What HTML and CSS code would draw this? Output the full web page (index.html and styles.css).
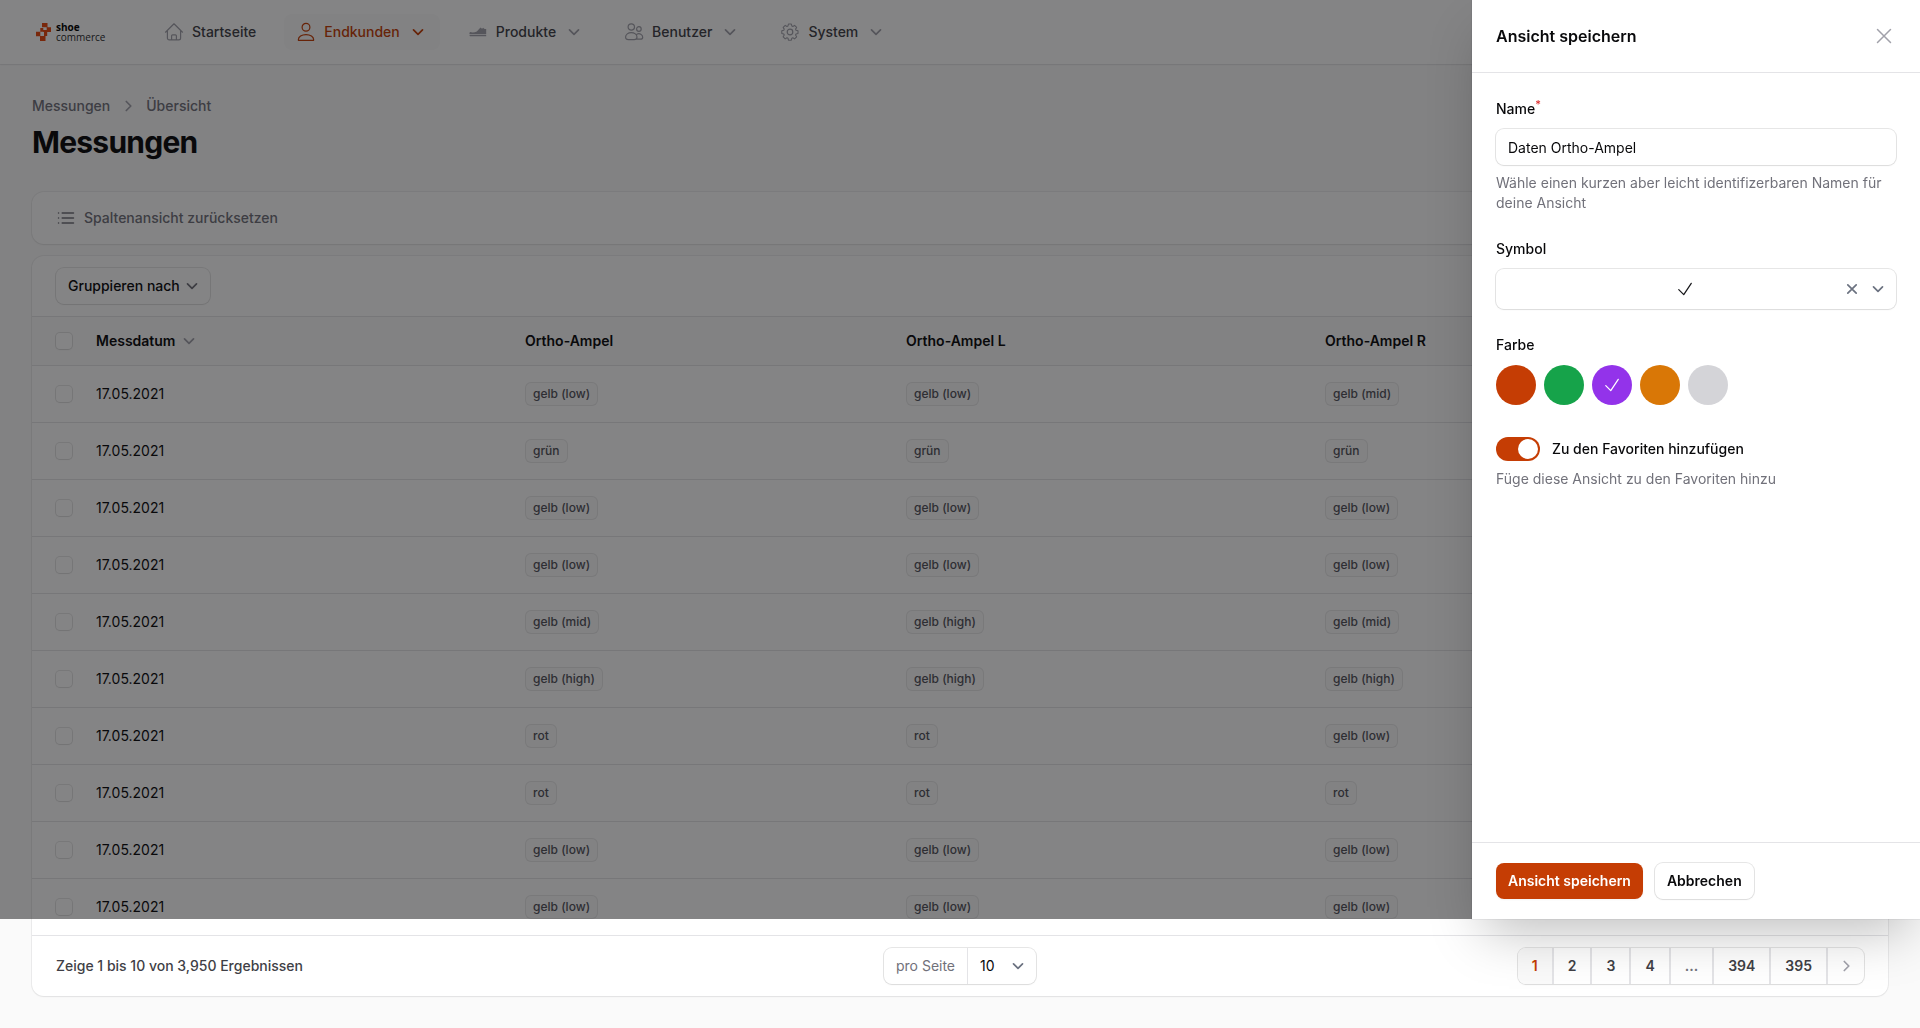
FILE: index.html
```html
<!DOCTYPE html>
<html lang="de">
<head>
    <meta charset="UTF-8">
    <meta name="viewport" content="width=device-width, initial-scale=1.0">
    <title>Messungen</title>
    <link rel="stylesheet" href="styles.css">
</head>
<body>
    <!-- Shared icons -->
    <svg class="sprite" aria-hidden="true">
        <symbol id="chevron-down" viewBox="0 0 20 20"><path d="M5.5 7.8 10 12.3 14.5 7.8" fill="none" stroke="currentColor" stroke-width="1.7" stroke-linecap="round" stroke-linejoin="round"/></symbol>
        <symbol id="chevron-right" viewBox="0 0 20 20"><path d="M8.3 5.5 12.8 10 8.3 14.5" fill="none" stroke="currentColor" stroke-width="1.7" stroke-linecap="round" stroke-linejoin="round"/></symbol>
        <symbol id="check" viewBox="0 0 24 24"><path d="M4.5 12.75l6 6 9-13.5" fill="none" stroke="currentColor" stroke-width="1.5" stroke-linecap="round" stroke-linejoin="round"/></symbol>
    </svg>

    <header class="topbar">
        <a class="logo" href="#" aria-label="shoe commerce">
            <svg class="logo-mark" viewBox="0 0 16 18" aria-hidden="true">
                <path fill="#e8470c" d="M6 0h5.500v4.300H6zM10.700 4.300H15V9h-4.300zM0 8.700h4.300v4.500H0zM4 13h5.500v5H4zM4.300 5h3v3.700h-3zM8 9h3.200v4H8zM7.300 7h3.400v2H7.300z"/>
            </svg>
            <span class="logo-text"><strong>shoe</strong><span>commerce</span></span>
        </a>
        <nav class="nav">
            <a class="nav-item" href="#">
                <svg class="icon" viewBox="0 0 20 20" aria-hidden="true"><path d="M1.500 10.200 10 1.800l8.500 8.400M3.400 8.600V16a1.900 1.900 0 0 0 1.900 1.900h9.400a1.900 1.900 0 0 0 1.900-1.900V8.600M7.600 17.800v-4a1 1 0 0 1 1-1h2.800a1 1 0 0 1 1 1v4"/></svg>
                Startseite
            </a>
            <button type="button" class="nav-item active">
                <svg class="icon" viewBox="0 0 20 20" aria-hidden="true"><circle cx="10" cy="5.300" r="3.900"/><path d="M2.400 18.300v-.7c0-2.900 3.200-5 7.600-5s7.600 2.100 7.600 5v.7z"/></svg>
                Endkunden
                <svg class="chevron"><use href="#chevron-down"/></svg>
            </button>
            <button type="button" class="nav-item">
                <svg class="icon shoe" viewBox="0 0 20 20" aria-hidden="true"><path d="M2 10c2 .8 4.700.6 6.800-.6l3.700-3.900 1.500 1.200 1.300-.9c.5 1 1.700 1.400 2.900 1.200v5.200H1.600c-.3-.8-.1-1.600.4-2.200zM1.500 13h16.700v1.300H2.500c-.6 0-1-.5-1-1.300z"/></svg>
                Produkte
                <svg class="chevron"><use href="#chevron-down"/></svg>
            </button>
            <button type="button" class="nav-item">
                <svg class="icon" viewBox="0 0 20 20" aria-hidden="true"><circle cx="7.300" cy="5" r="3.200"/><circle cx="14.900" cy="7" r="2.300"/><path d="M1.600 15c0-2.400 2.500-4.400 5.700-4.400s5.700 2 5.700 4.400c0 1.900-1 2.600-2.800 2.600H4.400c-1.800 0-2.800-.7-2.800-2.600zM12.800 12.200c2.800-1.300 5.900.4 5.900 3 0 1.500-.8 2-2.200 2h-4"/></svg>
                Benutzer
                <svg class="chevron"><use href="#chevron-down"/></svg>
            </button>
            <button type="button" class="nav-item">
                <svg class="icon" viewBox="0 0 20 20" aria-hidden="true"><circle cx="10" cy="10" r="2.800"/><path d="M8.400 2h3.200l.5 2.200 1.200.5 1.900-1.200 2.300 2.300-1.200 1.900.5 1.200 2.200.5v3.200l-2.200.5-.5 1.200 1.200 1.900-2.300 2.300-1.900-1.200-1.200.5-.5 2.200H8.400l-.5-2.200-1.200-.5-1.900 1.200-2.300-2.300 1.200-1.900-.5-1.200-2.200-.5V9.400l2.200-.5.5-1.200-1.200-1.900 2.300-2.300 1.900 1.200 1.200-.5z" transform="translate(.9 .2) scale(.9)"/></svg>
                System
                <svg class="chevron"><use href="#chevron-down"/></svg>
            </button>
        </nav>
    </header>

    <main class="content">
        <nav class="breadcrumbs">
            <a href="#">Messungen</a>
            <svg class="chevron"><use href="#chevron-right"/></svg>
            <a href="#">Übersicht</a>
        </nav>
        <h1>Messungen</h1>

        <div class="card views">
            <button type="button" class="reset-btn">
                <svg class="icon" viewBox="0 0 20 20" aria-hidden="true"><path d="M6.200 5h11.300M6.200 10h11.300M6.200 15h11.300M2.500 5h.1M2.500 10h.1M2.500 15h.1"/></svg>
                Spaltenansicht zurücksetzen
            </button>
        </div>

        <div class="card">
            <div class="table-toolbar">
                <button type="button" class="btn group-btn">
                    Gruppieren nach
                    <svg class="chevron"><use href="#chevron-down"/></svg>
                </button>
            </div>
            <table>
                <thead>
                    <tr>
                        <th class="col-check"><input type="checkbox" aria-label="Alle auswählen"></th>
                        <th class="col-date"><button type="button" class="sort-btn">Messdatum <svg class="chevron"><use href="#chevron-down"/></svg></button></th>
                        <th class="col-ampel">Ortho-Ampel</th>
                        <th class="col-left">Ortho-Ampel L</th>
                        <th>Ortho-Ampel R</th>
                    </tr>
                </thead>
                <tbody>
                    <tr><td><input type="checkbox" aria-label="Zeile 1"></td><td>17.05.2021</td><td><span class="badge">gelb (low)</span></td><td><span class="badge">gelb (low)</span></td><td><span class="badge">gelb (mid)</span></td></tr>
                    <tr><td><input type="checkbox" aria-label="Zeile 2"></td><td>17.05.2021</td><td><span class="badge">grün</span></td><td><span class="badge">grün</span></td><td><span class="badge">grün</span></td></tr>
                    <tr><td><input type="checkbox" aria-label="Zeile 3"></td><td>17.05.2021</td><td><span class="badge">gelb (low)</span></td><td><span class="badge">gelb (low)</span></td><td><span class="badge">gelb (low)</span></td></tr>
                    <tr><td><input type="checkbox" aria-label="Zeile 4"></td><td>17.05.2021</td><td><span class="badge">gelb (low)</span></td><td><span class="badge">gelb (low)</span></td><td><span class="badge">gelb (low)</span></td></tr>
                    <tr><td><input type="checkbox" aria-label="Zeile 5"></td><td>17.05.2021</td><td><span class="badge">gelb (mid)</span></td><td><span class="badge">gelb (high)</span></td><td><span class="badge">gelb (mid)</span></td></tr>
                    <tr><td><input type="checkbox" aria-label="Zeile 6"></td><td>17.05.2021</td><td><span class="badge">gelb (high)</span></td><td><span class="badge">gelb (high)</span></td><td><span class="badge">gelb (high)</span></td></tr>
                    <tr><td><input type="checkbox" aria-label="Zeile 7"></td><td>17.05.2021</td><td><span class="badge">rot</span></td><td><span class="badge">rot</span></td><td><span class="badge">gelb (low)</span></td></tr>
                    <tr><td><input type="checkbox" aria-label="Zeile 8"></td><td>17.05.2021</td><td><span class="badge">rot</span></td><td><span class="badge">rot</span></td><td><span class="badge">rot</span></td></tr>
                    <tr><td><input type="checkbox" aria-label="Zeile 9"></td><td>17.05.2021</td><td><span class="badge">gelb (low)</span></td><td><span class="badge">gelb (low)</span></td><td><span class="badge">gelb (low)</span></td></tr>
                    <tr><td><input type="checkbox" aria-label="Zeile 10"></td><td>17.05.2021</td><td><span class="badge">gelb (low)</span></td><td><span class="badge">gelb (low)</span></td><td><span class="badge">gelb (low)</span></td></tr>
                </tbody>
            </table>
            <div class="table-footer">
                <span class="result-count">Zeige 1 bis 10 von 3,950 Ergebnissen</span>
                <div class="per-page">
                    <label for="perPage">pro Seite</label>
                    <div class="select-wrap">
                        <select id="perPage">
                            <option>10</option>
                            <option>25</option>
                            <option>50</option>
                        </select>
                        <svg class="chevron"><use href="#chevron-down"/></svg>
                    </div>
                </div>
                <nav class="pagination">
                    <button type="button" class="current">1</button>
                    <button type="button">2</button>
                    <button type="button">3</button>
                    <button type="button">4</button>
                    <button type="button" class="dots" disabled>...</button>
                    <button type="button">394</button>
                    <button type="button">395</button>
                    <button type="button" class="next" aria-label="Weiter"><svg class="chevron"><use href="#chevron-right"/></svg></button>
                </nav>
            </div>
        </div>
    </main>

    <div class="overlay"></div>

    <form class="drawer">
        <div class="drawer-header">
            <h2>Ansicht speichern</h2>
            <button type="button" class="close-btn" aria-label="Schließen">
                <svg class="icon-lg" viewBox="0 0 24 24" aria-hidden="true"><path d="M5.500 5.500l13 13M18.500 5.500l-13 13"/></svg>
            </button>
        </div>
        <div class="drawer-body">
            <div class="form-group">
                <label for="viewName">Name<sup>*</sup></label>
                <input type="text" id="viewName" value="Daten Ortho-Ampel">
                <p class="hint">Wähle einen kurzen aber leicht identifizerbaren Namen für deine Ansicht</p>
            </div>
            <div class="form-group">
                <label for="viewIcon">Symbol</label>
                <div class="icon-select">
                    <button type="button" id="viewIcon" class="icon-value"><svg class="icon-lg"><use href="#check"/></svg></button>
                    <button type="button" class="icon-clear" aria-label="Entfernen"><svg viewBox="0 0 20 20" class="icon"><path d="M5.800 5.800l8.400 8.400M14.200 5.800l-8.400 8.400"/></svg></button>
                    <svg class="chevron"><use href="#chevron-down"/></svg>
                </div>
            </div>
            <fieldset class="form-group">
                <legend>Farbe</legend>
                <div class="swatches">
                    <label class="swatch primary"><input type="radio" name="color" aria-label="Orange"></label>
                    <label class="swatch green"><input type="radio" name="color" aria-label="Grün"></label>
                    <label class="swatch purple"><input type="radio" name="color" aria-label="Violett" checked><svg class="swatch-check"><use href="#check"/></svg></label>
                    <label class="swatch amber"><input type="radio" name="color" aria-label="Gelb"></label>
                    <label class="swatch gray"><input type="radio" name="color" aria-label="Grau"></label>
                </div>
            </fieldset>
            <div class="form-group">
                <div class="toggle-row">
                    <input type="checkbox" id="favorite" class="toggle" role="switch" checked>
                    <label for="favorite">Zu den Favoriten hinzufügen</label>
                </div>
                <p class="hint">Füge diese Ansicht zu den Favoriten hinzu</p>
            </div>
        </div>
        <div class="drawer-footer">
            <button type="submit" class="btn btn-primary">Ansicht speichern</button>
            <button type="button" class="btn btn-cancel">Abbrechen</button>
        </div>
    </form>
</body>
</html>
```
FILE: styles.css
```css
:root {
    --primary: #c53d04;
    --ring: rgba(9, 9, 11, 0.1);
    --line: #e4e4e7;
    --modal-bottom: 109px;
}
* {
    box-sizing: border-box;
}
body {
    margin: 0;
    background: #fafafa;
    color: #09090b;
    font-family: Inter, "Liberation Sans", sans-serif;
    font-size: 14px;
    line-height: 20px;
}
button,
input,
select {
    font: inherit;
    color: inherit;
    margin: 0;
}
button {
    border: none;
    background: none;
    padding: 0;
    cursor: pointer;
}
a {
    color: inherit;
    text-decoration: none;
}
.sprite {
    position: absolute;
    width: 0;
    height: 0;
}
.icon,
.chevron {
    width: 20px;
    height: 20px;
    flex-shrink: 0;
}
.icon,
.icon-lg {
    fill: none;
    stroke: currentColor;
    stroke-width: 1.2;
    stroke-linecap: round;
    stroke-linejoin: round;
}
.icon-lg {
    width: 24px;
    height: 24px;
}

/* Top bar */
.topbar {
    display: flex;
    align-items: center;
    height: 64px;
    padding: 0 32px;
    background: #fff;
    box-shadow: 0 0 0 1px rgba(9, 9, 11, 0.05), 0 1px 2px rgba(0, 0, 0, 0.05);
}
.logo {
    display: flex;
    align-items: center;
    gap: 4px;
    width: 120px;
    padding-left: 4px;
}
.logo-mark {
    width: 16px;
    height: 18px;
}
.logo-text {
    display: flex;
    flex-direction: column;
    font-family: "Open Sans", sans-serif;
    font-size: 10px;
    line-height: 10px;
    color: #27272a;
}
.logo-text strong {
    color: #000;
}
.nav {
    display: flex;
    gap: 16px;
}
.nav-item {
    display: flex;
    align-items: center;
    gap: 8px;
    padding: 8px 12px;
    border-radius: 8px;
    font-weight: 500;
    color: #3f3f46;
}
.nav-item .icon,
.nav-item .chevron {
    color: #a1a1aa;
}
.nav-item .shoe {
    fill: currentColor;
    stroke: none;
}
.nav-item.active,
.nav-item.active .icon,
.nav-item.active .chevron {
    color: var(--primary);
}
.nav-item.active {
    background: #fafafa;
}

/* Page */
.content {
    padding: 32px;
}
.breadcrumbs {
    display: flex;
    align-items: center;
    gap: 8px;
    margin-bottom: 8px;
    font-weight: 500;
    color: #71717a;
}
.breadcrumbs .chevron {
    color: #a1a1aa;
}
h1 {
    margin: 0 0 32px;
    font-size: 30px;
    line-height: 36px;
    font-weight: 700;
    letter-spacing: -0.025em;
}
.card {
    background: #fff;
    border-radius: 12px;
    box-shadow: 0 0 0 1px rgba(9, 9, 11, 0.05), 0 1px 2px rgba(0, 0, 0, 0.05);
}
.views {
    margin-bottom: 12px;
    padding: 16px 24px;
}
.reset-btn {
    display: flex;
    align-items: center;
    gap: 8px;
    font-weight: 500;
    color: #71717a;
}
.reset-btn .icon {
    stroke-width: 1.5;
}
.table-toolbar {
    display: flex;
    padding: 12px 24px;
    border-bottom: 1px solid var(--line);
}
.btn {
    display: inline-flex;
    align-items: center;
    gap: 4px;
    padding: 8px 12px;
    border-radius: 8px;
    background: #fff;
    box-shadow: 0 0 0 1px var(--ring), 0 1px 2px rgba(0, 0, 0, 0.05);
    font-weight: 600;
}
.group-btn {
    gap: 2px;
    padding-right: 8px;
    font-weight: 500;
}
.group-btn .chevron {
    color: #71717a;
}

/* Table */
table {
    width: 100%;
    table-layout: fixed;
    border-collapse: collapse;
}
th,
td {
    padding: 0 12px;
    text-align: left;
    border-bottom: 1px solid var(--line);
}
th {
    height: 48px;
    background: #fafafa;
    font-weight: 600;
}
td {
    height: 57px;
}
th:first-child,
td:first-child {
    padding: 0 0 0 24px;
}
.col-check {
    width: 52px;
}
.col-date {
    width: 429px;
}
.col-ampel {
    width: 381px;
}
.col-left {
    width: 419px;
}
.sort-btn {
    display: flex;
    align-items: center;
    gap: 4px;
}
.sort-btn .chevron {
    color: #a1a1aa;
}
table input[type="checkbox"] {
    appearance: none;
    display: block;
    width: 16px;
    height: 16px;
    border-radius: 4px;
    background: #fff;
    box-shadow: 0 0 0 1px var(--ring), 0 1px 2px rgba(0, 0, 0, 0.05);
}
.badge {
    display: inline-block;
    padding: 4px 8px;
    border-radius: 6px;
    background: #fafafa;
    box-shadow: inset 0 0 0 1px rgba(82, 82, 91, 0.1);
    color: #52525b;
    font-size: 12px;
    line-height: 16px;
    font-weight: 500;
    vertical-align: middle;
}
.table-footer {
    display: grid;
    grid-template-columns: 1fr auto 1fr;
    align-items: center;
    padding: 12px 24px;
}
.result-count {
    font-weight: 500;
    color: #3f3f46;
}
.per-page {
    display: flex;
    height: 36px;
    border-radius: 8px;
    box-shadow: 0 0 0 1px var(--ring), 0 1px 2px rgba(0, 0, 0, 0.05);
}
.per-page label {
    padding: 8px 12px;
    border-right: 1px solid var(--line);
    color: #71717a;
}
.select-wrap {
    position: relative;
}
.select-wrap select {
    appearance: none;
    width: 68px;
    height: 36px;
    padding: 0 12px;
    border: none;
    background: transparent;
}
.select-wrap .chevron {
    position: absolute;
    top: 8px;
    right: 8px;
    color: #6b7280;
    pointer-events: none;
}
.pagination {
    display: flex;
    justify-self: end;
    height: 36px;
    border-radius: 8px;
    overflow: hidden;
    background: #fff;
    box-shadow: 0 0 0 1px var(--ring), 0 1px 2px rgba(0, 0, 0, 0.05);
}
.pagination button {
    padding: 0 14px;
    border-right: 2px solid var(--line);
    font-weight: 600;
    color: #3f3f46;
}
.pagination .current {
    background: #fafafa;
    color: var(--primary);
}
.pagination .dots {
    color: #71717a;
}
.pagination .next {
    display: flex;
    align-items: center;
    padding: 0 8px;
    border: none;
    color: #a1a1aa;
}

/* Slide-over */
.overlay {
    position: fixed;
    inset: 0 0 var(--modal-bottom);
    background: rgba(9, 9, 11, 0.5);
}
.drawer {
    position: fixed;
    top: 0;
    right: 0;
    bottom: var(--modal-bottom);
    display: flex;
    flex-direction: column;
    width: 448px;
    max-width: 100%;
    background: #fff;
    box-shadow: 0 0 0 1px rgba(9, 9, 11, 0.05), 0 25px 50px -12px rgba(0, 0, 0, 0.25);
}
.drawer-header {
    display: flex;
    align-items: center;
    justify-content: space-between;
    padding: 24px;
    border-bottom: 1px solid var(--line);
}
.drawer-header h2 {
    margin: 0;
    font-size: 16px;
    line-height: 24px;
    font-weight: 600;
}
.close-btn {
    display: flex;
    color: #a1a1aa;
}
.close-btn .icon-lg {
    stroke-width: 1.5;
}
.drawer-body {
    flex: 1;
    padding: 24px;
    overflow: auto;
}
.form-group {
    display: flex;
    flex-direction: column;
    gap: 8px;
    margin: 0 0 24px;
    padding: 0;
    border: none;
}
.form-group label,
.form-group legend {
    padding: 0;
    line-height: 24px;
    font-weight: 500;
}
.form-group legend {
    margin-bottom: 8px;
}
sup {
    color: #dc2626;
    font-size: 11px;
    line-height: 0;
}
input[type="text"] {
    height: 36px;
    padding: 0 12px;
    border: none;
    border-radius: 8px;
    box-shadow: 0 0 0 1px var(--ring), 0 1px 2px rgba(0, 0, 0, 0.05);
}
.hint {
    margin: 0;
    color: #71717a;
}
.icon-select {
    display: flex;
    align-items: center;
    height: 40px;
    padding-right: 8px;
    border-radius: 8px;
    box-shadow: 0 0 0 1px var(--ring), 0 1px 2px rgba(0, 0, 0, 0.05);
    color: #6b7280;
}
.icon-value {
    display: flex;
    flex: 1;
    justify-content: center;
    padding-left: 32px;
    color: #18181b;
}
.icon-value .icon-lg {
    width: 20px;
    height: 20px;
}
.icon-clear {
    display: flex;
    margin-right: 6px;
}
.icon-clear .icon {
    stroke-width: 1.7;
}
.swatches {
    display: flex;
    gap: 8px;
    margin-bottom: 8px;
}
.swatch {
    display: flex;
    align-items: center;
    justify-content: center;
    width: 40px;
    height: 40px;
    border-radius: 50%;
    cursor: pointer;
}
.swatch input {
    position: absolute;
    opacity: 0;
}
.swatch-check {
    width: 20px;
    height: 20px;
    color: #fff;
}
.primary {
    background: var(--primary);
}
.green {
    background: #16a34a;
}
.purple {
    background: #9333ea;
}
.amber {
    background: #d97706;
}
.gray {
    background: #d4d4d8;
}
.toggle-row {
    display: flex;
    align-items: center;
    gap: 12px;
}
.toggle {
    appearance: none;
    width: 44px;
    height: 24px;
    padding: 2px;
    border-radius: 12px;
    background: #e4e4e7;
}
.toggle::before {
    content: "";
    display: block;
    width: 20px;
    height: 20px;
    border-radius: 50%;
    background: #fff;
}
.toggle:checked {
    background: var(--primary);
}
.toggle:checked::before {
    margin-left: 20px;
}
.drawer-footer {
    display: flex;
    gap: 12px;
    padding: 20px 24px;
    border-top: 1px solid var(--line);
}
.btn-primary {
    background: var(--primary);
    box-shadow: 0 1px 2px rgba(0, 0, 0, 0.05);
    color: #fff;
}
```
